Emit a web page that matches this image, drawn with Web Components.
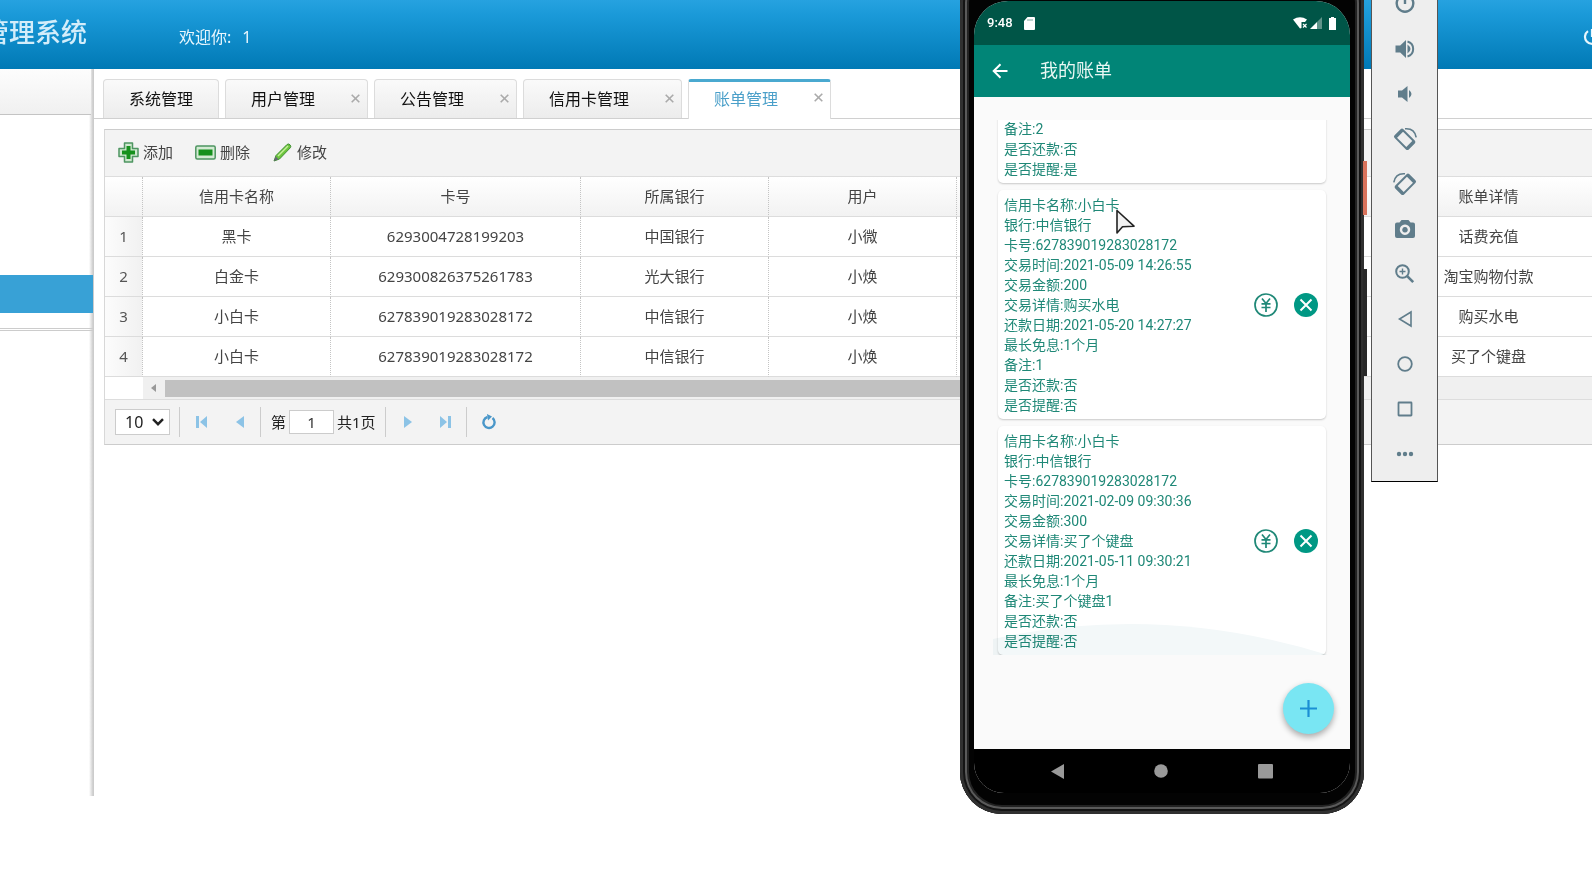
<!DOCTYPE html>
<html lang="zh-CN">
<head>
<meta charset="utf-8">
<title>账单管理</title>
<style>
  html, body { margin: 0; height: 100%; overflow: hidden; background: #fff; }
  body { font-family: "Noto Sans", "Noto Sans CJK SC", sans-serif; font-size: 15px; line-height: 20px; color: #444; }
</style>
</head>
<body>
<admin-shell>
  <app-header slot="header" user="1">管理系统</app-header>
  <side-nav slot="side"></side-nav>
  <tab-strip slot="tabs"></tab-strip>
  <bill-grid slot="content"></bill-grid>
</admin-shell>
<phone-frame>
  <bill-card plain>
    <p>备注:2</p><p>是否还款:否</p><p>是否提醒:是</p>
  </bill-card>
  <bill-card>
    <p>信用卡名称:小白卡</p><p>银行:中信银行</p><p>卡号:627839019283028172</p><p>交易时间:2021-05-09 14:26:55</p><p>交易金额:200</p><p>交易详情:购买水电</p><p>还款日期:2021-05-20 14:27:27</p><p>最长免息:1个月</p><p>备注:1</p><p>是否还款:否</p><p>是否提醒:否</p>
  </bill-card>
  <bill-card>
    <p>信用卡名称:小白卡</p><p>银行:中信银行</p><p>卡号:627839019283028172</p><p>交易时间:2021-02-09 09:30:36</p><p>交易金额:300</p><p>交易详情:买了个键盘</p><p>还款日期:2021-05-11 09:30:21</p><p>最长免息:1个月</p><p>备注:买了个键盘1</p><p>是否还款:否</p><p>是否提醒:否</p>
  </bill-card>
</phone-frame>
<emulator-bar></emulator-bar>
<mouse-pointer></mouse-pointer>

<script>
const define = (name, html) => customElements.define(name, class extends HTMLElement {
  constructor() {
    super();
    this.attachShadow({ mode: 'open' }).innerHTML = typeof html === 'function' ? html(this) : html;
  }
});

const reset = `:host,*{box-sizing:border-box} button{font:inherit;color:inherit;background:none;border:0;padding:0;margin:0;display:flex;align-items:center;justify-content:center} svg{display:block}`;

define('admin-shell', `<style>${reset}
  :host{display:flex;flex-direction:column;height:100vh;overflow:hidden}
  .body{flex:1;display:flex;min-height:0;margin-bottom:100px}
  main{flex:1;min-width:0;overflow:hidden}
</style>
<slot name="header"></slot>
<div class="body"><slot name="side"></slot><main><slot name="tabs"></slot><slot name="content"></slot></main></div>`);

define('app-header', el => `<style>${reset}
  :host{display:flex;align-items:center;height:69px;flex:none;color:#e8f6fd;background:linear-gradient(#26a2e0 0,#1b9ad9 14px,#0079b5 100%);overflow:hidden}
  h1{margin:0 0 6px;width:87px;display:flex;justify-content:flex-end;font-size:26px;line-height:34px;font-weight:500;white-space:nowrap;flex:none;color:#d3edfa}
  .hi{margin-left:92px;margin-top:4px;font-size:16px;line-height:24px;display:flex;gap:11px}
  button{margin:4px -9px 0 auto}
</style>
<h1><slot></slot></h1><div class="hi"><span>欢迎你:</span><span>${el.getAttribute('user')}</span></div>
<button aria-label="退出"><svg width="18" height="18" viewBox="0 0 18 18" fill="none" stroke="#e8f6fd" stroke-width="2.2"><path d="M9 1v8M5 3.2a7 7 0 1 0 8 0"/></svg></button>`);

define('side-nav', `<style>${reset}
  :host{display:block;width:94px;flex:none;border-right:1px solid #ccc;background:linear-gradient(90deg,#fff0,#ccc) right/4px 100% no-repeat}
  .head{height:46px;background:linear-gradient(#fdfdfd,#f0f0f0);border-bottom:1px solid #c4c4c4;margin-right:2px}
  .list{height:214px;padding-top:160px;border-bottom:1px solid #ccc}
  a{display:block;height:38px;background:#38a1d6}
  .line{border-bottom:1px solid #ccc;height:2px}
</style>
<div class="head"></div><nav class="list"><a href="#" aria-label="账单管理"></a></nav><div class="line"></div>`);

const cross = `<svg width="9" height="9" viewBox="0 0 9 9" stroke="#aaa" stroke-width="1.6"><path d="M.7.7l7.6 7.6M8.3.7L.7 8.3"/></svg>`;
const tab = (t, closable = true, on = false) => `<div class="tab${on ? ' on' : ''}"><button class="name" role="tab">${t}</button>${closable ? `<button class="x" aria-label="关闭">${cross}</button>` : ''}</div>`;
define('tab-strip', `<style>${reset}
  :host{display:flex;gap:6px;height:50px;padding:10px 0 0 9px;border-bottom:1px solid #d0d0d0}
  .tab{display:flex;height:39px;border:1px solid #dcdcdc;border-bottom:0;border-radius:4px 4px 0 0;background:linear-gradient(#fafafa,#ececec);font-size:16px;color:#111;white-space:nowrap}
  .name{padding:0 25px;height:38px}
  .x{width:27px;height:36px;padding-left:3px}
  .on{height:40px;background:#fff;border-top:3px solid #4aa9d0;border-radius:3px 3px 0 0;color:#4a9fc9}
  .on .name{height:34px} .on .x{height:31px}
</style>
${tab('系统管理', false)}${tab('用户管理')}${tab('公告管理')}${tab('信用卡管理')}${tab('账单管理', true, true)}`);

const rows = [
  ['黑卡', '6293004728199203', '中国银行', '小微', '', '话费充值'],
  ['白金卡', '629300826375261783', '光大银行', '小焕', '', '淘宝购物付款'],
  ['小白卡', '627839019283028172', '中信银行', '小焕', '', '购买水电'],
  ['小白卡', '627839019283028172', '中信银行', '小焕', '', '买了个键盘']];
const heads = ['信用卡名称', '卡号', '所属银行', '用户', '', '账单详情'];
define('bill-grid', `<style>${reset}
  :host{display:block;margin:10px 0 0 10px;border:1px solid #ccc;border-right:0;border-left-color:#d8d8d8}
  .tools{display:flex;gap:22px;height:47px;padding:0 0 2px 13px;background:#f3f3f3;border-bottom:1px solid #ddd}
  .tools button{gap:4px} .tools svg{width:21px;height:21px}
  .view{overflow:hidden}
  table{table-layout:fixed;width:1509px;border-collapse:separate;border-spacing:0}
  th,td{height:40px;padding:0 0 2px;text-align:center;font-weight:400;border-bottom:1px solid #dcdcdc;border-right:1px dotted #c4c4c4}
  thead th{background:linear-gradient(#fff,#f2f2f2)}
  tbody th{background:linear-gradient(90deg,#fcfcfc,#f1f1f1);color:#555}
  .scroll{display:flex;align-items:center;height:22px;margin-left:38px;background:#f0f0f0}
  .scroll i{flex:1;height:17px;background:#c1c1c1}
  .scroll i:last-child{flex:0 0 260px;background:none}
  .scroll svg{width:22px;flex:none}
</style>
<div class="tools">
<button><svg viewBox="0 0 21 21"><path d="M6.5 1h8v5.500H20v8h-5.500V20h-8v-5.500H1v-8h5.500z" fill="#cfe8cf" stroke="#4e9561" stroke-width="1.500" stroke-linejoin="round"/><path d="M8.500 4h4v4.500H17v4h-4.500V17h-4v-4.500H4v-4h4.500z" fill="#15901c"/></svg>添加</button>
<button><svg viewBox="0 0 21 21"><rect x=".8" y="4" width="19.400" height="13" rx="1.500" fill="#d3ead3" stroke="#4e9561" stroke-width="1.500"/><rect x="3.500" y="7.500" width="14" height="6" fill="#15901c"/></svg>删除</button>
<button><svg viewBox="0 0 21 21"><path d="M2 19l2-5.500L15 2.500q1.500-1.200 3 .3t.3 3L7.500 17z" fill="#6cc53c" stroke="#3f8f33"/><path d="M2 19l1.700-4.500 2.800 2.800z" fill="#667"/><path d="M6 14L16 4" stroke="#c5f09a" stroke-width="1.500"/></svg>修改</button>
</div>
<div class="view"><table><colgroup><col style="width:38px"><col style="width:188px"><col style="width:250px"><col style="width:188px"><col style="width:188px"><col style="width:407px"><col style="width:250px"></colgroup>
<thead><tr><th></th>${heads.map(h => `<th>${h}</th>`).join('')}</tr></thead>
<tbody>${rows.map((r, i) => `<tr><th>${i + 1}</th>${r.map(c => `<td>${c}</td>`).join('')}</tr>`).join('')}</tbody></table>
<div class="scroll"><svg height="10" viewBox="0 0 22 10"><path d="M13 1v8L8 5z" fill="#999"/></svg><i></i><i></i></div></div>
<grid-pager></grid-pager>`);

define('grid-pager', `<style>${reset}
  :host{display:flex;align-items:center;height:45px;padding:0 0 1px 10px;background:#f3f3f3;border-top:1px solid #ddd;color:#222}
  .size{display:grid;align-items:center;width:55px}
  .size>*{grid-area:1/1}
  select{appearance:none;width:55px;height:26px;border:1px solid #ccc;background:#fff;font:inherit;font-size:16px;line-height:22px;color:#222;padding:0 9px;border-radius:0}
  .size svg{justify-self:end;margin-right:6px;pointer-events:none}
  hr{width:1px;height:30px;margin:0 0 0 9px;border:0;background:#ccc;flex:none}
  .flush{margin-left:1px}
  hr+button{margin-left:3px}
  button{width:38px;height:30px}
  label{display:flex;align-items:center;margin-left:10px;gap:3px}
  input{width:45px;height:24px;border:1px solid #ccc;text-align:center;font:inherit;color:#333;padding:0;background:#fff}
</style>
<div class="size"><select aria-label="每页条数"><option>10</option></select><svg width="12" height="8" viewBox="0 0 12 8" fill="none" stroke="#222" stroke-width="2.400"><path d="M1 1.200l5 5 5-5"/></svg></div>
<hr>
<button aria-label="首页"><svg width="12" height="12" viewBox="0 0 12 12" fill="#8cc3e6"><path d="M0 0h3v12H0zM11 0v12L4 6z"/></svg></button>
<button aria-label="上一页"><svg width="10" height="12" viewBox="0 0 10 12" fill="#8cc3e6"><path d="M9 0v12L1 6z"/></svg></button>
<hr class="flush">
<label>第<input value="1" aria-label="页码">共1页</label>
<hr>
<button aria-label="下一页"><svg width="8" height="12" viewBox="0 0 8 12" fill="#8cc3e6"><path d="M0 0v12l8-6z"/></svg></button>
<button aria-label="末页"><svg width="12" height="12" viewBox="0 0 12 12" fill="#8cc3e6"><path d="M8 0h3v12H8zM0 0v12l7-6z"/></svg></button>
<hr class="flush">
<button aria-label="刷新"><svg width="16" height="16" viewBox="0 0 16 16" fill="none" stroke="#4a97c9" stroke-width="2.400"><path d="M11.500 4a5.600 5.600 0 1 1-5-1"/><path d="M6 0l5 2.500L7 6.500z" fill="#4a97c9" stroke="none"/></svg></button>`);

define('phone-frame', `<style>${reset}
  :host{position:absolute;left:960px;top:-40px;width:404px;height:854px;padding:41px 14px 21px;border-radius:44px 44px 42px 42px;background:#030303;
    box-shadow:inset 0 0 0 3px #303030,inset 0 0 0 5px #141414,inset 0 0 0 7px #5a5a5a,inset 0 0 0 9px #222;font-family:Roboto,"Noto Sans CJK SC",sans-serif}
  .key{position:absolute;left:403px;width:4px;background:#2a2a2a}
  .power{top:201px;height:54px;background:#d9735c}
  .vol{top:309px;height:107px}
  .screen{display:flex;flex-direction:column;height:100%;border-radius:34px 34px 30px 30px;overflow:hidden;background:#fafafa}
  .status{display:flex;align-items:center;height:44px;padding:0 13px;background:#005547;color:#fff;font-size:13px;font-weight:500;flex:none}
  .status span{margin-right:11px}
  .status .end{margin-left:auto;display:flex;gap:3px}
  .bar{display:flex;align-items:center;height:52px;padding-left:18px;gap:32px;background:#018577;color:#e9f7f4;flex:none}
  h2{margin:0;font-size:18px;line-height:26px;font-weight:400}
  .list{position:relative;display:flex;flex-direction:column;justify-content:flex-end;gap:7px;height:535px;margin:23px 17px 0 19px;padding:0 7px 0 5px;overflow:hidden;flex:none}
  .glow{position:absolute;left:0;bottom:0;z-index:1;mix-blend-mode:multiply;pointer-events:none}
  .floor{flex:1;display:flex;justify-content:flex-end;align-items:flex-start;padding:28px 16px 0}
  .fab{width:51px;height:51px;border-radius:50%;background:#79e6f3;box-shadow:0 3px 6px #0005}
  .nav{display:flex;align-items:center;justify-content:space-around;height:44px;padding:0 32px;background:#000;flex:none}
  .nav svg{fill:#999}
</style>
<div class="key power"></div><div class="key vol"></div>
<div class="screen">
  <div class="status"><span>9:48</span>
    <svg width="11" height="13" viewBox="0 0 11 13"><path fill="#fff" d="M3.500 0H10q1 0 1 1v11q0 1-1 1H1q-1 0-1-1V4z"/><path d="M4 2v2M6 2v2M8 2v2" stroke="#7da89f"/></svg>
    <div class="end">
      <svg width="14" height="12" viewBox="0 0 14 12"><path fill="#fff" d="M0 2.500Q7-2 14 2.500L12 5H8.500v6L7 11.500z"/><path d="M10 7l3.500 3.500M13.500 7L10 10.500" stroke="#fff" stroke-width="1.200"/></svg>
      <svg width="12" height="12" viewBox="0 0 12 12"><path fill="#fff" d="M0 12L7 5v7z"/><path fill="#5f938a" d="M7 5l5-5v12H7z"/></svg>
      <svg width="12" height="13" viewBox="0 0 12 13"><path fill="#fff" d="M5 1h1V0h3v1h2v12H4V1z"/></svg>
    </div></div>
  <div class="bar"><button aria-label="返回"><svg width="16" height="16" viewBox="0 0 16 16" fill="none" stroke="#fff" stroke-width="2"><path d="M15.500 8H2M8.500 1.200L1.700 8l6.800 6.800"/></svg></button><h2>我的账单</h2></div>
  <div class="list"><slot></slot>
    <svg class="glow" width="340" height="31" viewBox="0 0 340 31"><path d="M0 15Q68 0 137 0Q236 0 335 31H0z" fill="#f3f8f9"/></svg></div>
  <div class="floor"><button class="fab" aria-label="添加"><svg width="17" height="17" viewBox="0 0 17 17" stroke="#1b8fd4" stroke-width="2.200"><path d="M8.500 0v17M0 8.500h17"/></svg></button></div>
  <div class="nav"><button aria-label="返回"><svg width="14" height="15" viewBox="0 0 14 15"><path d="M13 0v15L0 7.500z"/></svg></button><button aria-label="主页"><svg width="14" height="14" viewBox="0 0 14 14"><circle cx="7" cy="7" r="6.800"/></svg></button><button aria-label="概览"><svg width="15" height="15" viewBox="0 0 15 15"><rect width="15" height="14.500" rx="1"/></svg></button></div>
</div>`);

define('bill-card', el => `<style>${reset}
  :host{display:flex;align-items:center;flex:none;padding:5px 8px 4px 6px;background:#fff;border-radius:5px;box-shadow:0 1px 2px #0003;font-size:14px;line-height:20px;color:#1f8877}
  :host([plain]){min-height:80px;align-items:flex-end}
  .text{flex:1;min-width:0}
  ::slotted(p){margin:0}
  button{margin-left:16px}
</style>
<div class="text"><slot></slot></div>${el.hasAttribute('plain') ? '' : `
<button aria-label="还款"><svg width="24" height="24" viewBox="0 0 24 24" fill="none" stroke="#1f8877" stroke-width="1.700"><circle cx="12" cy="12" r="11"/><path d="M8 5.500l4 5 4-5M12 10.500V19M7.500 10.800h9M7.500 14.500h9"/></svg></button>
<button aria-label="删除"><svg width="24" height="24" viewBox="0 0 24 24"><circle cx="12" cy="12" r="12" fill="#009884"/><path d="M6.500 6.500l11 11M17.500 6.500l-11 11" stroke="#fff" stroke-width="2"/></svg></button>`}`);

const tool = (label, body) => `<button aria-label="${label}"><svg width="24" height="24" viewBox="0 0 24 24">${body}</svg></button>`;
const line = 'fill="none" stroke="#607d8b"';
const rotate = `<g ${line} stroke-width="2"><g transform="rotate(-45 11.5 12.500)"><rect x="6.500" y="3.500" width="10.500" height="18" rx="1"/><path d="M6.500 4.500H17M6.500 20.500H17" stroke-width="3"/></g><path d="M12 1.800q9.500-.8 11.200 8.500" stroke-width="1.600"/></g>`;
define('emulator-bar', `<style>${reset}
  :host{position:absolute;left:1371px;top:-20px;width:67px;padding-bottom:5px;background:#eee;border:1px solid #555;border-bottom-color:#000}
  button{width:100%;height:45px}
</style>
${tool('电源', `<path ${line} stroke-width="2.400" d="M12 3v9M7 4.800a8.300 8.300 0 1 0 10 0"/>`)}
${tool('音量加', `<path fill="#607d8b" d="M2.500 8.500h4.700L13 3v18l-5.800-5.500H2.500z"/><path ${line} stroke-width="2" d="M14.500 4.500a7.800 7.800 0 0 1 0 15"/><path fill="#607d8b" d="M14.500 7.500q6 4.500 0 9z"/>`)}
${tool('音量减', `<path fill="#607d8b" d="M5 8.500h4L14.500 4v16L9 15.500H5zM16 8q5 4 0 8z"/>`)}
${tool('向左旋转', rotate)}
${tool('向右旋转', `<g transform="matrix(-1 0 0 1 24 0)">${rotate}</g>`)}
${tool('截图', `<path fill="#607d8b" fill-rule="evenodd" d="M8.500 3h7l2 2.500H20q2 0 2 2V19q0 2-2 2H4q-2 0-2-2V7.500q0-2 2-2h2.500zM12 7.500a5.200 5.200 0 1 0 .01 0zM12 10a2.800 2.800 0 1 1-.01 0z"/>`)}
${tool('缩放', `<g ${line} stroke-width="2"><circle cx="9.500" cy="9.500" r="6.300"/><path d="M14.200 14.200l6 6" stroke-width="2.600"/><path d="M6.500 9.500h6M9.500 6.500v6" stroke-width="1.400"/></g>`)}
${tool('返回', `<path ${line} stroke-width="1.600" d="M18 5v14L6.500 12z"/>`)}
${tool('主页', `<circle ${line} stroke-width="1.800" cx="12" cy="12" r="6.800"/>`)}
${tool('概览', `<rect ${line} stroke-width="1.800" x="5.500" y="5.500" width="13" height="13" rx=".5"/>`)}
${tool('更多', `<g fill="#607d8b"><circle cx="6" cy="12" r="2.200"/><circle cx="12" cy="12" r="2.200"/><circle cx="18" cy="12" r="2.200"/></g>`)}`);

define('mouse-pointer', `<style>:host{position:absolute;left:1115px;top:208px;pointer-events:none} svg{display:block}</style>
<svg width="21" height="28" viewBox="0 0 21 28"><path d="M2 2.500v22.500l5.500-6.200 11.500-.6z" fill="#f2f2f2" stroke="#222" stroke-width="1.600" stroke-linejoin="round"/></svg>`);
</script>
</body>
</html>
